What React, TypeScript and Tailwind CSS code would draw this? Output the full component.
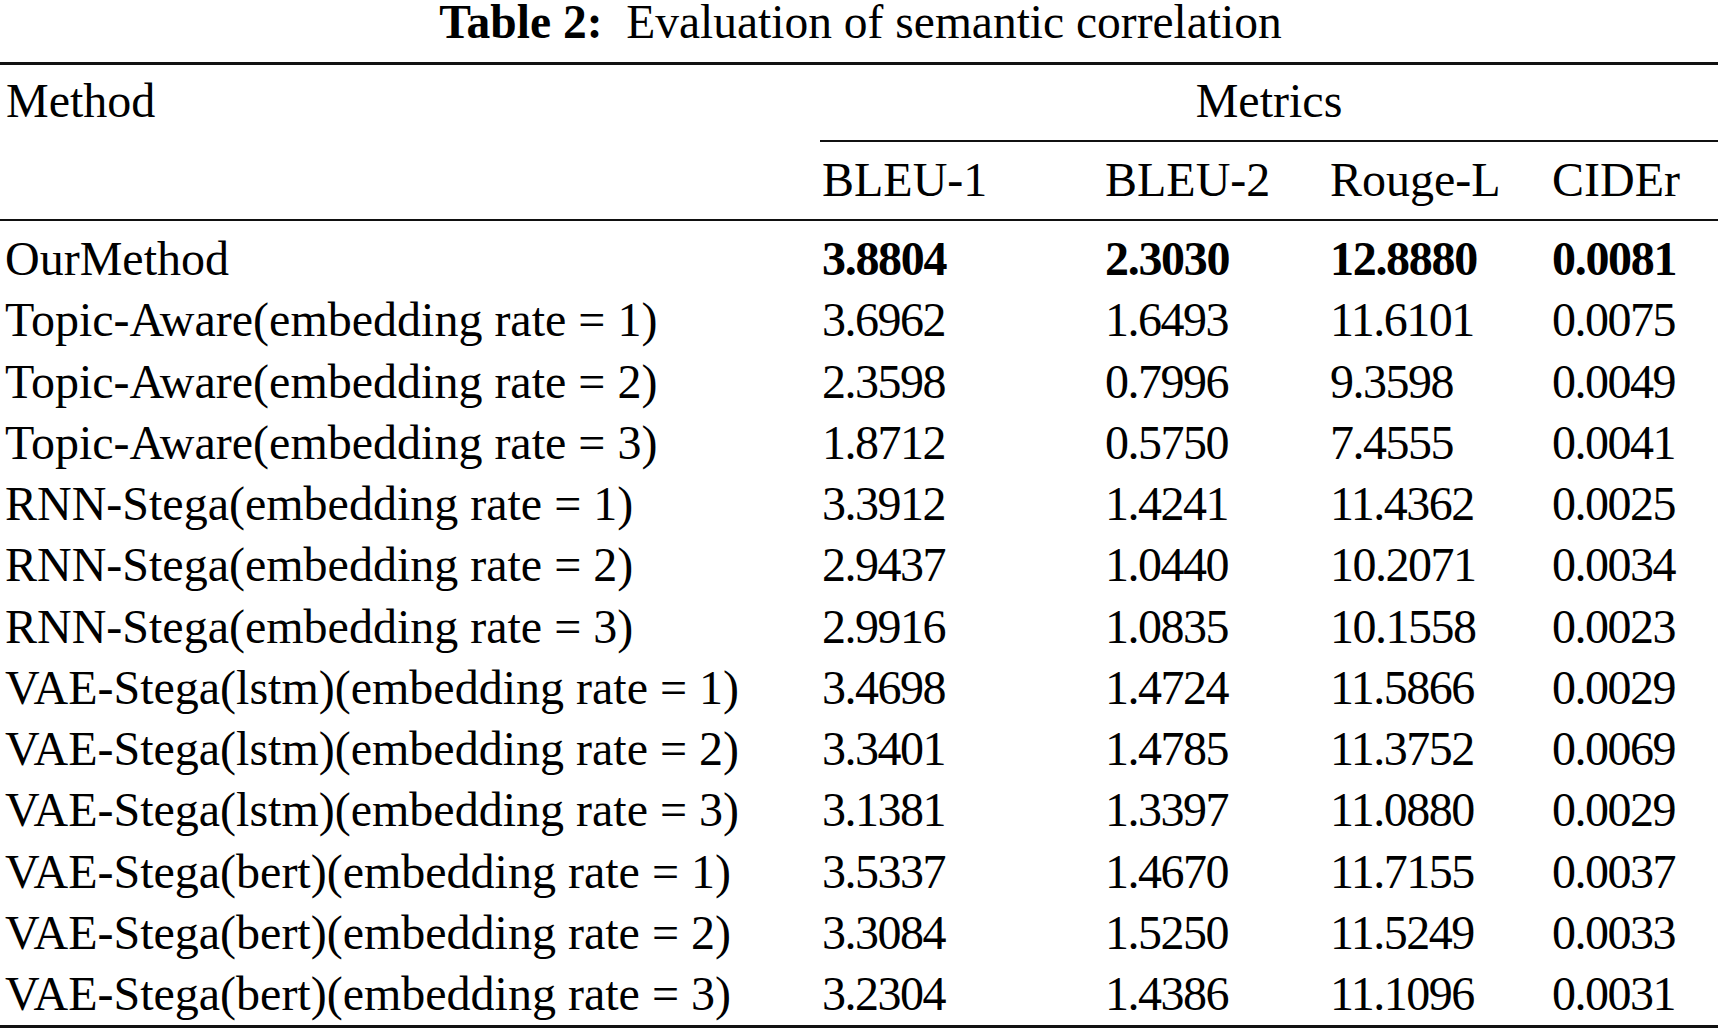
import React from "react";

const rows: [string, string, string, string, string][] = [
  ["Topic-Aware(embedding rate = 1)", "3.6962", "1.6493", "11.6101", "0.0075"],
  ["Topic-Aware(embedding rate = 2)", "2.3598", "0.7996", "9.3598", "0.0049"],
  ["Topic-Aware(embedding rate = 3)", "1.8712", "0.5750", "7.4555", "0.0041"],
  ["RNN-Stega(embedding rate = 1)", "3.3912", "1.4241", "11.4362", "0.0025"],
  ["RNN-Stega(embedding rate = 2)", "2.9437", "1.0440", "10.2071", "0.0034"],
  ["RNN-Stega(embedding rate = 3)", "2.9916", "1.0835", "10.1558", "0.0023"],
  ["VAE-Stega(lstm)(embedding rate = 1)", "3.4698", "1.4724", "11.5866", "0.0029"],
  ["VAE-Stega(lstm)(embedding rate = 2)", "3.3401", "1.4785", "11.3752", "0.0069"],
  ["VAE-Stega(lstm)(embedding rate = 3)", "3.1381", "1.3397", "11.0880", "0.0029"],
  ["VAE-Stega(bert)(embedding rate = 1)", "3.5337", "1.4670", "11.7155", "0.0037"],
  ["VAE-Stega(bert)(embedding rate = 2)", "3.3084", "1.5250", "11.5249", "0.0033"],
  ["VAE-Stega(bert)(embedding rate = 3)", "3.2304", "1.4386", "11.1096", "0.0031"],
];

const cols = "grid grid-cols-[820px_284px_225px_222px_167px]";

export default function App() {
  return (
    <div
      className="w-[1721px] h-[1033px] bg-white text-black overflow-hidden"
      style={{ fontFamily: '"Liberation Serif", "Times New Roman", serif' }}
    >
      <div className="text-center text-[47.5px] leading-[44px] h-[44px] whitespace-nowrap">
        <span className="font-bold">Table 2:</span>
        <span>&nbsp; Evaluation of semantic correlation</span>
      </div>
      <div className="w-[1718px] mt-[18px] border-t-[3px] border-[#111]">
        <div className={cols}>
          <div className="row-span-2 pl-[6px] text-[48px] leading-[72px]">Method</div>
          <div className="col-span-4 h-[77px] border-b-2 border-[#111] text-center text-[48px] leading-[72px]">
            Metrics
          </div>
          <div className="h-[77px] pl-[2px] text-[48px] leading-[76px]">BLEU-1</div>
          <div className="h-[77px] pl-[1px] text-[48px] leading-[76px]">BLEU-2</div>
          <div className="h-[77px] pl-[1px] text-[48px] leading-[76px]">Rouge-L</div>
          <div className="h-[77px] pl-[1px] text-[48px] leading-[76px]">CIDEr</div>
        </div>
        <div className="border-t-2 border-[#111] pt-[7px] pb-[1px] border-b-[3px]">
          <div className={`${cols} text-[48px] leading-[61.25px] whitespace-nowrap`}>
            <div className="pl-[5px]">OurMethod</div>
            <div className="pl-[2px] font-bold tracking-[-1.3px]">3.8804</div>
            <div className="pl-[1px] font-bold tracking-[-1.3px]">2.3030</div>
            <div className="pl-[1px] font-bold tracking-[-1.3px]">12.8880</div>
            <div className="pl-[1px] font-bold tracking-[-1.3px]">0.0081</div>
          </div>
          {rows.map((r) => (
            <div key={r[0]} className={`${cols} text-[48px] leading-[61.25px] whitespace-nowrap`}>
              <div className="pl-[5px]">{r[0]}</div>
              <div className="pl-[2px] tracking-[-1.5px]">{r[1]}</div>
              <div className="pl-[1px] tracking-[-1.5px]">{r[2]}</div>
              <div className="pl-[1px] tracking-[-1.5px]">{r[3]}</div>
              <div className="pl-[1px] tracking-[-1.5px]">{r[4]}</div>
            </div>
          ))}
        </div>
      </div>
    </div>
  );
}
